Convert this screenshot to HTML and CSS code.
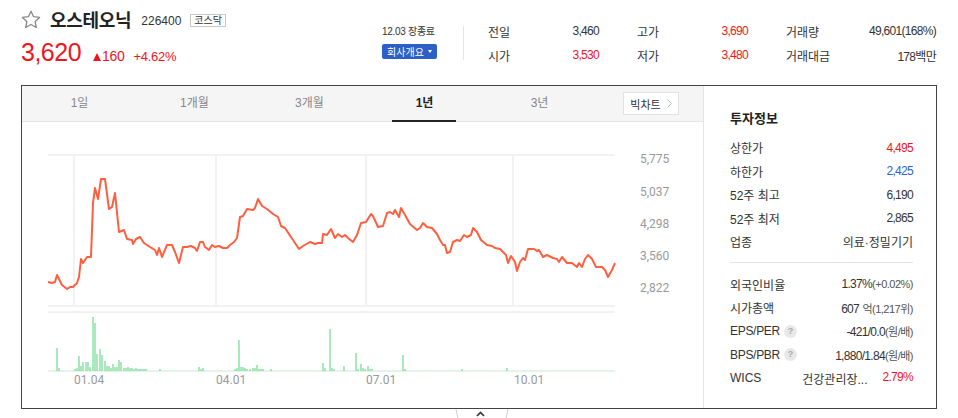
FILE: index.html
```html
<!DOCTYPE html>
<html lang="ko">
<head>
    <meta charset="UTF-8">
    <title>오스테오닉 226400</title>
    <link rel="stylesheet" href="styles.css">
</head>
<body>
    <div class="summary">
        <div class="title-block">
            <div class="name-row">
                <svg class="star" width="20" height="19" viewBox="0 0 20 19">
                    <path d="M10 1.2 L12.6 6.7 L18.6 7.4 L14.1 11.5 L15.3 17.5 L10 14.5 L4.7 17.5 L5.9 11.5 L1.4 7.4 L7.4 6.7 Z" fill="none" stroke="#888" stroke-width="1.3" stroke-linejoin="round"/>
                </svg>
                <h1 class="name">오스테오닉</h1>
                <span class="code">226400</span>
                <span class="market">코스닥</span>
            </div>
            <div class="price-row">
                <span class="price">3,620</span>
                <span class="arrow-up"></span>
                <span class="change">160</span>
                <span class="rate">+4.62%</span>
            </div>
        </div>
        <div class="status">
            <div class="date">12.03 장종료</div>
            <button class="company-btn">회사개요 <span class="caret"></span></button>
        </div>
        <div class="divider"></div>
        <div class="stats">
            <div class="stat"><span>전일</span><span class="num">3,460</span></div>
            <div class="stat"><span>고가</span><span class="num up">3,690</span></div>
            <div class="stat"><span>거래량</span><span class="num">49,601(168%)</span></div>
            <div class="stat"><span>시가</span><span class="num up">3,530</span></div>
            <div class="stat"><span>저가</span><span class="num up">3,480</span></div>
            <div class="stat"><span>거래대금</span><span class="num">178백만</span></div>
        </div>
    </div>

    <div class="chart-box">
        <div class="chart-pane">
            <div class="tabs">
                <span class="tab">1일</span>
                <span class="tab">1개월</span>
                <span class="tab">3개월</span>
                <span class="tab active">1년</span>
                <span class="tab">3년</span>
                <span class="big-chart">빅차트
                    <svg width="5" height="9" viewBox="0 0 5 9"><path d="M0.5 0.5 L4.5 4.5 L0.5 8.5" fill="none" stroke="#bbb" stroke-width="1"/></svg>
                </span>
            </div>
            <svg class="chart" width="681" height="286" viewBox="22 122 681 286">
                <!-- price grid -->
                <g stroke="#f2f2f2" stroke-width="2">
                    <line x1="48" y1="155" x2="615" y2="155"/>
                    <line x1="74" y1="155" x2="74" y2="306"/>
                    <line x1="216" y1="155" x2="216" y2="306"/>
                    <line x1="366" y1="155" x2="366" y2="306"/>
                    <line x1="513" y1="155" x2="513" y2="306"/>
                    <line x1="48" y1="306" x2="615" y2="306"/>
                    <line x1="48" y1="312" x2="615" y2="312"/>
                </g>
                <path fill="none" stroke="#ff5f3f" stroke-width="2" stroke-linejoin="round" d="M48 282 L52 283 L55 282 L57 275 L62 285 L67 289 L70 287 L73 287 L77 283 L79 277 L81 259 L83 263 L87 257 L91 257 L93 203 L95 188 L98 199 L101 179 L105 179 L109 209 L112 207 L115 193 L119 232 L124 230 L127 239 L132 240 L133 244 L136 239 L140 237 L144 243 L150 247 L155 250 L157 255 L159 248 L162 257 L167 245 L172 245 L175 252 L179 263 L183 247 L187 247 L191 246 L195 248 L197 251 L200 242 L203 242 L205 247 L209 250 L212 245 L215 247 L219 246 L223 248 L227 248 L230 245 L234 242 L237 238 L240 217 L243 216 L247 209 L253 210 L255 208 L258 199 L262 206 L267 209 L273 214 L278 217 L281 226 L285 228 L291 237 L295 243 L299 249 L303 246 L310 242 L315 244 L318 243 L322 243 L323 234 L327 235 L331 229 L335 238 L338 234 L342 237 L345 235 L348 238 L353 242 L357 235 L361 223 L366 222 L371 214 L373 216 L378 227 L383 226 L387 213 L390 212 L393 214 L395 210 L399 217 L401 208 L405 215 L410 224 L417 230 L420 228 L423 223 L427 227 L432 228 L437 234 L440 240 L443 245 L445 245 L447 253 L450 252 L453 242 L457 240 L460 241 L464 235 L467 237 L471 235 L473 228 L477 232 L481 240 L487 245 L492 246 L495 248 L500 249 L503 252 L506 255 L508 263 L511 256 L515 262 L517 271 L520 262 L523 258 L525 260 L528 249 L534 249 L537 251 L539 250 L543 257 L547 255 L549 256 L553 258 L557 259 L559 262 L562 257 L567 263 L572 263 L577 267 L579 263 L582 267 L585 259 L588 255 L592 259 L596 267 L602 267 L605 270 L608 277 L612 270 L615 263"/>
                <!-- volume -->
                <rect x="48" y="370" width="567" height="2" fill="#e6f3ea"/>
                <path fill="none" stroke="#86dea2" stroke-width="1.4" d="M57 371v-23 M59 371v-3 M75 371v-2 M77 371v-3 M79 371v-15 M81 371v-5 M83 371v-9 M86 371v-9 M88 371v-9 M90 371v-4 M93 371v-54 M95 371v-48 M97 371v-17 M100 371v-22 M102 371v-16 M105 371v-10 M107 371v-5 M109 371v-5 M111 371v-3 M113 371v-7 M115 371v-4 M117 371v-4 M119 371v-11 M121 371v-9 M124 371v-3 M126 371v-3 M128 371v-4 M130 371v-3 M132 371v-3 M134 371v-2 M136 371v-3 M138 371v-2 M140 371v-2 M142 371v-2 M144 371v-2 M146 371v-2 M160 371v-2 M199 371v-4 M201 371v-2 M203 371v-3 M235 371v-2 M237 371v-3 M239 371v-31 M241 371v-4 M243 371v-4 M245 371v-3 M247 371v-2 M250 371v-2 M253 371v-3 M255 371v-3 M257 371v-6 M259 371v-2 M261 371v-2 M263 371v-2 M271 371v-2 M323 371v-8 M325 371v-3 M330 371v-42 M332 371v-3 M334 371v-2 M344 371v-5 M356 371v-18 M358 371v-2 M361 371v-7 M363 371v-3 M365 371v-2 M368 371v-5 M370 371v-2 M372 371v-2 M403 371v-16 M405 371v-2 M462 371v-2 M507 371v-3"/>
                <g class="axis">
                    <text x="640" y="163">5,775</text>
                    <text x="640" y="196">5,037</text>
                    <text x="640" y="228">4,298</text>
                    <text x="640" y="260">3,560</text>
                    <text x="640" y="292">2,822</text>
                    <text x="74" y="384">01.04</text>
                    <text x="216" y="384">04.01</text>
                    <text x="366" y="384">07.01</text>
                    <text x="514" y="384">10.01</text>
                </g>
            </svg>
        </div>
        <div class="info">
            <h2 class="info-title">투자정보</h2>
            <ul class="info-list">
                <li><span>상한가</span><span class="num up">4,495</span></li>
                <li><span>하한가</span><span class="num down">2,425</span></li>
                <li><span>52주 최고</span><span class="num">6,190</span></li>
                <li><span>52주 최저</span><span class="num">2,865</span></li>
                <li><span>업종</span><span>의료·정밀기기</span></li>
            </ul>
            <ul class="info-list second">
                <li><span>외국인비율</span><span><span class="num">1.37%</span><small>(+0.02%)</small></span></li>
                <li><span>시가총액</span><span><span class="num">607</span> <small>억(1,217위)</small></span></li>
                <li><span class="label-help">EPS/PER <i class="help">?</i></span><span><span class="num">-421/0.0</span><small>(원/배)</small></span></li>
                <li><span class="label-help">BPS/PBR <i class="help">?</i></span><span><span class="num">1,880/1.84</span><small>(원/배)</small></span></li>
                <li><span>WICS</span><span class="wics"><span>건강관리장...</span><span class="num up">2.79%</span></span></li>
            </ul>
        </div>
    </div>
    <div class="fold-wrap">
        <svg class="fold" width="56" height="10" viewBox="0 0 56 10">
            <path d="M1 0 L3 10 M53 0 L51 10" stroke="#cfcfcf" stroke-width="1" fill="none"/>
            <path d="M22 7 L25.5 3.5 L29 7" stroke="#333" stroke-width="1.6" fill="none"/>
        </svg>
    </div>
</body>
</html>
```

FILE: styles.css
```css
body {
    margin: 0;
    width: 958px;
    font-family: "Liberation Sans", "Noto Sans CJK KR", sans-serif;
    color: #333;
    background-color: #fff;
}
.summary {
    display: flex;
    height: 85px;
    padding-left: 21px;
    box-sizing: border-box;
}
.title-block {
    width: 361px;
}
.name-row {
    display: flex;
    align-items: center;
    height: 22px;
    margin-top: 8px;
}
.star {
    margin-right: 9px;
}
.name {
    margin: 0;
    font-size: 18px;
    font-weight: bold;
    color: #222;
    letter-spacing: -0.3px;
}
.code {
    margin-left: 10px;
    font-size: 12px;
    color: #333;
    padding-top: 3px;
}
.market {
    margin-left: 9px;
    margin-top: 3px;
    padding: 0 3px;
    border: 1px solid #c8c8c8;
    font-size: 10px;
    line-height: 11px;
    color: #333;
}
.price-row {
    display: flex;
    align-items: baseline;
    margin-top: 8px;
    color: #f0141e;
}
.price {
    font-size: 25px;
    line-height: 28px;
    letter-spacing: -0.5px;
}
.arrow-up {
    display: inline-block;
    width: 0;
    height: 0;
    margin-left: 12px;
    border-left: 4.5px solid transparent;
    border-right: 4.5px solid transparent;
    border-bottom: 8px solid #f0141e;
}
.change {
    margin-left: 1px;
    font-size: 14px;
    letter-spacing: -0.3px;
}
.rate {
    margin-left: 9px;
    font-size: 13px;
    letter-spacing: -0.3px;
}
.status {
    width: 55px;
    padding-top: 25px;
}
.date {
    font-size: 10px;
    line-height: 14px;
    letter-spacing: -0.3px;
    color: #333;
    white-space: nowrap;
}
.company-btn {
    display: flex;
    align-items: center;
    justify-content: center;
    width: 55px;
    height: 15px;
    margin-top: 5px;
    padding: 0;
    border: none;
    border-radius: 2px;
    background-color: #2d5fc6;
    color: #fff;
    font-family: inherit;
    font-size: 10px;
    white-space: nowrap;
}
.caret {
    display: inline-block;
    margin-left: 4px;
    border-left: 2.5px solid transparent;
    border-right: 2.5px solid transparent;
    border-top: 3px solid #fff;
}
.divider {
    width: 1px;
    height: 34px;
    margin: 26px 0 0 26px;
    background-color: #e5e5e5;
}
.stats {
    display: grid;
    grid-template-columns: 111px 111px 150px;
    grid-auto-rows: 24px;
    column-gap: 38px;
    margin-left: 24px;
    padding-top: 19px;
    font-size: 12px;
}
.stat {
    display: flex;
    justify-content: space-between;
    align-items: center;
}
.num {
    letter-spacing: -0.7px;
}
.up {
    color: #f0141e;
}
.down {
    color: #2d64d9;
}
.chart-box {
    display: flex;
    height: 324px;
    margin: 0 21px;
    border: 1px solid #444;
    box-sizing: border-box;
}
.chart-pane {
    width: 682px;
    border-right: 1px solid #e5e5e5;
    box-sizing: border-box;
}
.tabs {
    display: flex;
    align-items: center;
    height: 36px;
    padding-right: 24px;
    background-color: #f5f5f5;
    border-bottom: 1px solid #e5e5e5;
    box-sizing: border-box;
    font-size: 12px;
}
.tab {
    position: relative;
    width: 115px;
    line-height: 35px;
    text-align: center;
    color: #888;
}
.tab.active {
    color: #222;
    font-weight: bold;
}
.tab.active::after {
    content: "";
    position: absolute;
    left: 25px;
    right: 26px;
    bottom: -1px;
    height: 2px;
    background-color: #222;
}
.big-chart {
    display: flex;
    align-items: center;
    justify-content: center;
    gap: 6px;
    width: 56px;
    height: 23px;
    margin-left: auto;
    border: 1px solid #e2e2e2;
    background-color: #fff;
    box-sizing: border-box;
    font-size: 11px;
    color: #333;
}
.chart {
    display: block;
}
.axis text {
    font-family: Roboto, "Liberation Sans", sans-serif;
    font-size: 12px;
    fill: #999;
}
.info {
    flex: 1;
    padding: 24px 23px 0 26px;
    font-size: 12px;
}
.info-title {
    margin: 0;
    font-size: 13px;
    line-height: 18px;
    color: #222;
}
.info-list {
    list-style: none;
    margin: 8px 0 0;
    padding: 0;
}
.info-list li {
    display: flex;
    justify-content: space-between;
    align-items: center;
    height: 23.5px;
    white-space: nowrap;
}
.info-list.second {
    margin-top: 19px;
    position: relative;
}
.info-list.second::before {
    content: "";
    position: absolute;
    left: 0;
    right: 0;
    top: -11px;
    height: 1px;
    background-color: #e5e5e5;
}
.info-list small {
    font-size: 11px;
    color: #555;
    letter-spacing: -0.5px;
}
.label-help {
    display: flex;
    align-items: center;
    letter-spacing: -0.3px;
}
.help {
    display: inline-block;
    width: 13px;
    height: 13px;
    margin-left: 4px;
    border-radius: 50%;
    background-color: #e8e8e8;
    color: #aaa;
    font-size: 9px;
    font-style: normal;
    font-weight: bold;
    line-height: 13px;
    text-align: center;
}
.wics {
    display: flex;
    gap: 15px;
}
.fold-wrap {
    height: 10px;
    padding-left: 455px;
}
.fold {
    display: block;
}
```
